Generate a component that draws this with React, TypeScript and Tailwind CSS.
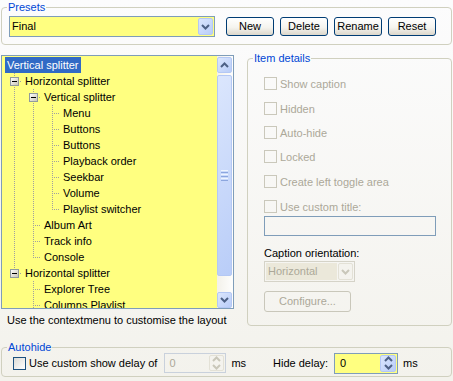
import React from "react";

type Row = { label: string; level: number; kids?: boolean; next?: boolean; anc: boolean[]; sel?: boolean };

const rows: Row[] = [
  { label: "Vertical splitter", level: 0, anc: [], sel: true },
  { label: "Horizontal splitter", level: 1, kids: true, next: true, anc: [] },
  { label: "Vertical splitter", level: 2, kids: true, next: true, anc: [true] },
  { label: "Menu", level: 3, next: true, anc: [true, true] },
  { label: "Buttons", level: 3, next: true, anc: [true, true] },
  { label: "Buttons", level: 3, next: true, anc: [true, true] },
  { label: "Playback order", level: 3, next: true, anc: [true, true] },
  { label: "Seekbar", level: 3, next: true, anc: [true, true] },
  { label: "Volume", level: 3, next: true, anc: [true, true] },
  { label: "Playlist switcher", level: 3, anc: [true, true] },
  { label: "Album Art", level: 2, next: true, anc: [true] },
  { label: "Track info", level: 2, next: true, anc: [true] },
  { label: "Console", level: 2, anc: [true] },
  { label: "Horizontal splitter", level: 1, kids: true, anc: [] },
  { label: "Explorer Tree", level: 2, next: true, anc: [false] },
  { label: "Columns Playlist", level: 2, next: true, anc: [false] },
];

const lx = (l: number) => 12 + 19 * (l - 1);

function Lines({ r }: { r: Row }) {
  const w = r.level === 0 ? 3 : 2 + 19 * r.level;
  const x = lx(r.level);
  return (
    <svg width={w} height={16} className="shrink-0" shapeRendering="crispEdges">
      {r.anc.map((on, i) =>
        on ? (
          <line key={i} x1={lx(i + 1) + 0.5} y1={0} x2={lx(i + 1) + 0.5} y2={16} stroke="#a0a0a0" strokeDasharray="1 1" />
        ) : null
      )}
      {r.level > 0 && (
        <>
          <line x1={x + 0.5} y1={0} x2={x + 0.5} y2={r.next ? 16 : 9} stroke="#a0a0a0" strokeDasharray="1 1" />
          <line x1={x} y1={8.5} x2={w - 1} y2={8.5} stroke="#a0a0a0" strokeDasharray="1 1" />
          {r.kids && (
            <>
              <defs>
                <linearGradient id="bx" x1="0" y1="0" x2="1" y2="1">
                  <stop offset="0" stopColor="#ffffff" />
                  <stop offset="1" stopColor="#c6c2b4" />
                </linearGradient>
              </defs>
              <rect x={x - 3.5} y={4.5} width={8} height={8} fill="url(#bx)" stroke="#919b9c" />
              <line x1={x - 2} y1={8.5} x2={x + 3} y2={8.5} stroke="#000" />
            </>
          )}
        </>
      )}
    </svg>
  );
}

function Chevron({ up, color = "#4d6185" }: { up?: boolean; color?: string }) {
  return (
    <svg width="9" height="6" viewBox="0 0 9 6">
      <path d={up ? "M1 5 L4.5 1.5 L8 5" : "M1 1 L4.5 4.5 L8 1"} fill="none" stroke={color} strokeWidth="2" />
    </svg>
  );
}

function Group({ title, className, children }: { title: string; className: string; children: React.ReactNode }) {
  return (
    <fieldset className={`rounded-[4px] border border-[#d0d0bf] ${className}`}>
      <legend className="ml-[5px] px-[1px] leading-[14px] text-[#0046d5]">{title}</legend>
      {children}
    </fieldset>
  );
}

function Btn({ label }: { label: string }) {
  return (
    <div className="flex h-[19px] w-[48px] items-center justify-center rounded-[3px] border border-[#003c74] bg-[linear-gradient(180deg,#ffffff_0%,#f5f4ef_55%,#dcd7cb_100%)] text-black">
      {label}
    </div>
  );
}

function Check({ off, label }: { off?: boolean; label: string }) {
  return (
    <div className="flex h-[13px] items-center">
      <span
        className={
          off
            ? "h-[13px] w-[13px] shrink-0 border border-[#cac8bb]"
            : "h-[13px] w-[13px] shrink-0 border border-[#1c5180] bg-[linear-gradient(135deg,#dcdcd7,#ffffff)]"
        }
      />
      <span className={`ml-[3px] leading-[14px] ${off ? "text-[#aca899]" : "text-black"}`}>{label}</span>
    </div>
  );
}

function BlueBtn({ className, children }: { className: string; children: React.ReactNode }) {
  return (
    <div
      className={`flex items-center justify-center rounded-[2px] border border-[#b4c8f4] bg-[linear-gradient(135deg,#dbe6fd,#b9cdf8)] ${className}`}
    >
      {children}
    </div>
  );
}

export default function App() {
  return (
    <div className="flex h-[381px] w-[453px] flex-col bg-[linear-gradient(180deg,#fcfcfd,#f3f2ec)] pl-[1px] font-['Liberation_Sans',Arial,sans-serif] text-[11px] text-black">
      <Group title="Presets" className="h-[45px] w-[451px]">
        <div className="flex items-center pl-[7px] pt-[2px]">
          <div className="flex h-[21px] w-[206px] items-center border border-[#7f9db9] bg-[#ffff80] pl-[2px] pr-[1px]">
            <span className="flex-1">Final</span>
            <BlueBtn className="h-[17px] w-[15px]">
              <Chevron />
            </BlueBtn>
          </div>
          <div className="ml-[11px] flex gap-[6px]">
            <Btn label="New" />
            <Btn label="Delete" />
            <Btn label="Rename" />
            <Btn label="Reset" />
          </div>
        </div>
      </Group>

      <div className="mt-[6px] flex items-start">
        <div className="mt-[4px] w-[233px]">
          <div className="flex h-[254px] border border-[#7f9db9] bg-[#ffff80]">
            <div className="flex-1 overflow-hidden pt-[1px]">
              {rows.map((r, i) => (
                <div key={i} className="flex h-[16px] items-center">
                  <Lines r={r} />
                  <span className={`whitespace-nowrap px-[2px] leading-[16px] ${r.sel ? "bg-[#316ac5] text-white" : ""}`}>{r.label}</span>
                </div>
              ))}
            </div>
            <div className="flex w-[16px] flex-col bg-[linear-gradient(90deg,#f3f1ea,#fefefd)] pt-[1px]">
              <BlueBtn className="h-[16px] w-[15px]">
                <Chevron up />
              </BlueBtn>
              <div className="flex-1">
                <BlueBtn className="mt-[2px] h-[201px] w-[15px] flex-col gap-[1px]">
                  <span className="h-[1px] w-[7px] bg-[#eef4fe]" />
                  <span className="h-[1px] w-[7px] bg-[#8ca6de]" />
                  <span className="h-[1px] w-[7px] bg-[#eef4fe]" />
                  <span className="h-[1px] w-[7px] bg-[#8ca6de]" />
                  <span className="h-[1px] w-[7px] bg-[#eef4fe]" />
                  <span className="h-[1px] w-[7px] bg-[#8ca6de]" />
                </BlueBtn>
              </div>
              <BlueBtn className="h-[16px] w-[15px]">
                <Chevron />
              </BlueBtn>
            </div>
          </div>
          <div className="mt-[4px] pl-[6px] leading-[14px]">Use the contextmenu to customise the layout</div>
        </div>

        <Group title="Item details" className="ml-[13px] h-[275px] w-[205px]">
          <div className="flex flex-col pl-[16px] pt-[12px]">
            <Check off label="Show caption" />
            <div className="mt-[12px]">
              <Check off label="Hidden" />
            </div>
            <div className="mt-[11px]">
              <Check off label="Auto-hide" />
            </div>
            <div className="mt-[11px]">
              <Check off label="Locked" />
            </div>
            <div className="mt-[12px]">
              <Check off label="Create left toggle area" />
            </div>
            <div className="mt-[12px]">
              <Check off label="Use custom title:" />
            </div>
            <div className="mt-[3px] h-[20px] w-[172px] border border-[#7f9db9]" />
            <div className="mt-[10px] leading-[14px]">Caption orientation:</div>
            <div className="mt-[1px] flex h-[21px] w-[91px] items-center border border-[#d5d3c8] p-[1px]">
              <span className="flex h-full flex-1 items-center bg-[#ebe8da] pl-[2px] text-[#aca899]">Horizontal</span>
              <span className="ml-[1px] flex h-full w-[15px] items-center justify-center rounded-[2px] border border-[#e3e1d6] bg-[#f4f3ee]">
                <Chevron color="#c9c7ba" />
              </span>
            </div>
            <div className="mt-[9px] flex h-[21px] w-[87px] items-center justify-center rounded-[3px] border border-[#c9c7ba] text-[#aca899]">
              Configure...
            </div>
          </div>
        </Group>
      </div>

      <Group title="Autohide" className="mt-[13px] h-[37px] w-[451px]">
        <div className="-mt-px flex h-[20px] items-center pl-[11px]">
          <Check label="Use custom show delay of" />
          <div className="ml-[7px] flex h-[20px] w-[62px] items-center border border-[#c9d1dc] pl-[4px] pr-[1px]">
            <span className="flex-1 text-[#aca899]">0</span>
            <span className="flex h-[16px] w-[15px] flex-col items-center justify-center gap-[2px] rounded-[2px] border border-[#e3e1d6] bg-[#f4f3ee]">
              <Chevron up color="#c9c7ba" />
              <Chevron color="#c9c7ba" />
            </span>
          </div>
          <span className="ml-[5px]">ms</span>
          <span className="ml-[27px]">Hide delay:</span>
          <div className="ml-[6px] flex h-[21px] w-[64px] items-center border border-[#7f9db9] bg-[#ffff80] pl-[5px] pr-[1px]">
            <span className="flex-1">0</span>
            <BlueBtn className="h-[17px] w-[16px] flex-col gap-[2px]">
              <Chevron up />
              <Chevron />
            </BlueBtn>
          </div>
          <span className="ml-[5px]">ms</span>
        </div>
      </Group>
    </div>
  );
}
